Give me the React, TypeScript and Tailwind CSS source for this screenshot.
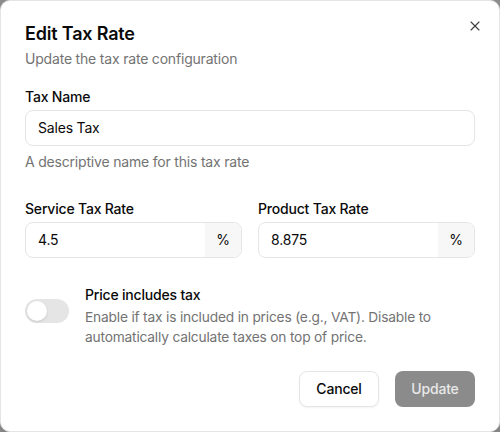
import { X } from 'lucide-react'

function RateField({ label, value }: { label: string; value: string }) {
  return (
    <div className="flex flex-col gap-1.5">
      <span className="text-sm font-medium leading-none text-[#0a0a0a]">{label}</span>
      <div className="flex h-9 overflow-hidden rounded-lg border border-[#e5e5e5] bg-white">
        <div className="flex flex-1 items-center px-3 text-sm text-[#0a0a0a]">{value}</div>
        <div className="flex w-9 items-center justify-center bg-[#f7f7f7] text-sm text-[#0a0a0a]">%</div>
      </div>
    </div>
  )
}

export default function App() {
  return (
    <div
      className="h-[432px] w-[500px] bg-[#8c8c8c] tracking-[-0.012em]"
      style={{ fontFamily: 'Inter, "Noto Sans", sans-serif' }}
    >
      <div className="relative flex h-full w-full flex-col rounded-[10px] border border-[#e5e5e5] bg-white px-6 pt-6 pb-6 shadow-lg">
        <button className="absolute right-[16px] top-[17px] text-[#404040]">
          <X size={16} strokeWidth={1.7} />
        </button>

        {/* Header */}
        <div className="flex flex-col gap-1.5">
          <h2 className="text-lg font-semibold leading-none text-[#0a0a0a]">Edit Tax Rate</h2>
          <p className="text-sm leading-5 text-[#737373]">Update the tax rate configuration</p>
        </div>

        {/* Tax name */}
        <div className="mt-[21px] flex flex-col gap-1.5">
          <span className="text-sm font-medium leading-none text-[#0a0a0a]">Tax Name</span>
          <div className="flex h-9 items-center rounded-lg border border-[#e5e5e5] px-3 text-sm text-[#0a0a0a]">Sales Tax</div>
          <p className="text-sm leading-5 text-[#737373]">A descriptive name for this tax rate</p>
        </div>

        {/* Rates */}
        <div className="mt-[30px] grid grid-cols-2 gap-4">
          <RateField label="Service Tax Rate" value="4.5" />
          <RateField label="Product Tax Rate" value="8.875" />
        </div>

        {/* Switch */}
        <div className="mt-[27px] flex gap-4">
          <div className="mt-[14px] flex h-6 w-11 shrink-0 items-center rounded-full bg-[#e5e5e5] px-0.5">
            <div className="h-5 w-5 rounded-full bg-white shadow" />
          </div>
          <div className="flex flex-col gap-0.5">
            <span className="text-sm font-medium leading-5 text-[#0a0a0a]">Price includes tax</span>
            <p className="text-[13.75px] leading-5 text-[#737373]">
              Enable if tax is included in prices (e.g., VAT). Disable to automatically calculate taxes on top of price.
            </p>
          </div>
        </div>

        {/* Footer */}
        <div className="mt-auto flex justify-end gap-4">
          <button className="h-9 w-[80px] rounded-lg border border-[#e5e5e5] bg-white text-sm font-medium text-[#0a0a0a] shadow-xs">
            Cancel
          </button>
          <button className="h-9 w-[80px] rounded-lg bg-[#8b8b8b] text-sm font-medium text-[#e8e8e8]">Update</button>
        </div>
      </div>
    </div>
  )
}
